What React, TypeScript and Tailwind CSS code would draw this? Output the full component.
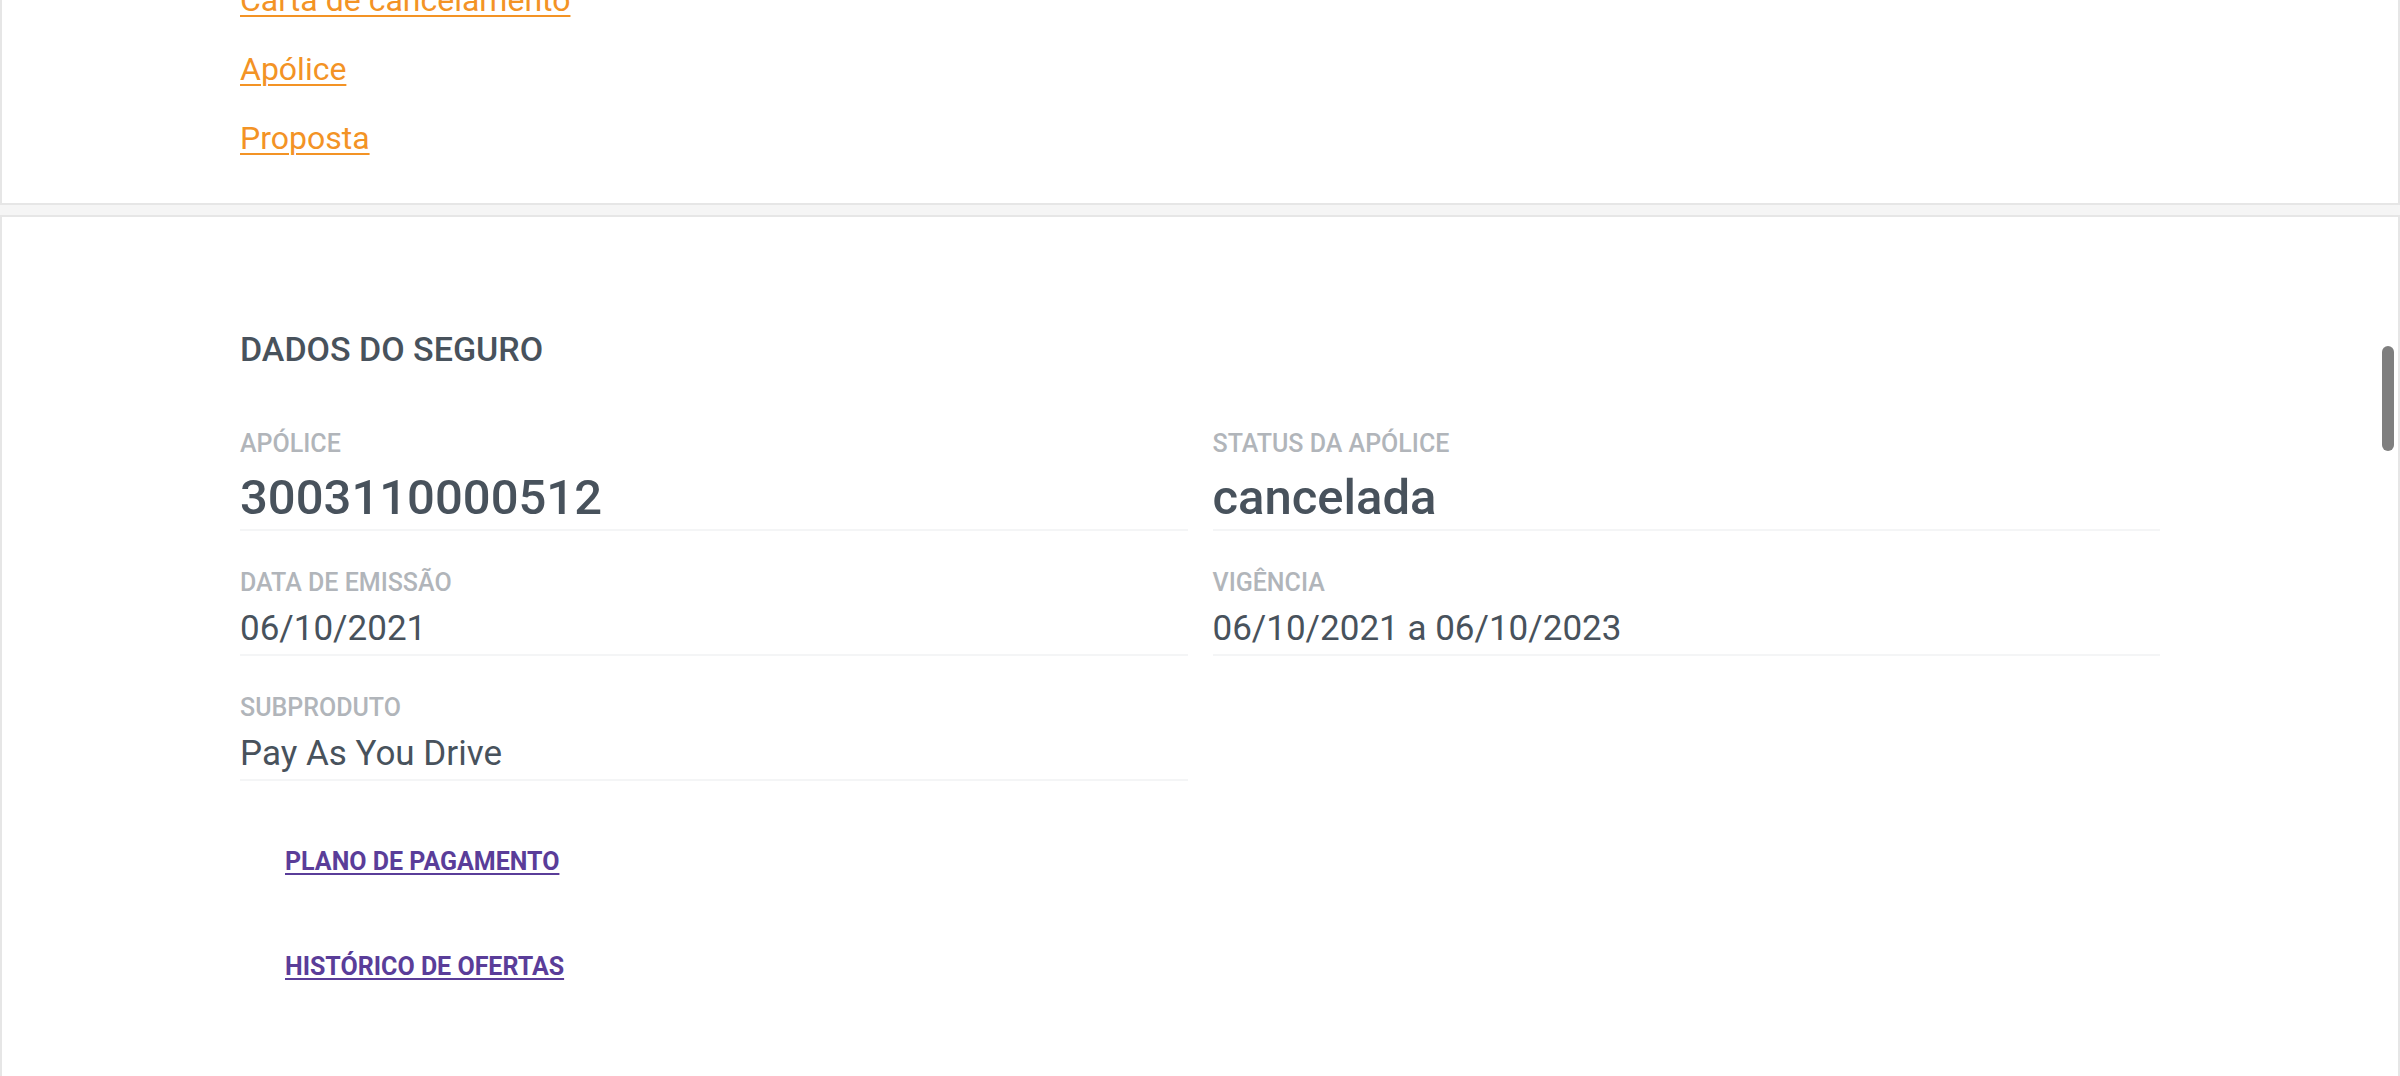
import type { ReactNode } from 'react'

const font = { fontFamily: 'Roboto, "Liberation Sans", Arial, sans-serif' }

// links of the documents card (page is scrolled, first one is cut at the top)
const docLinks = ['Carta de cancelamento', 'Apólice', 'Proposta']

function Field({ label, value, big = false }: { label: string; value: ReactNode; big?: boolean }) {
  return (
    <div className={`flex flex-col border-b-2 border-[#f4f5f6] ${big ? 'pb-[3px]' : 'pb-[5px]'}`}>
      <span className="text-[25px] leading-[30px] font-medium uppercase text-[#b1b5ba]">{label}</span>
      {big ? (
        <span className="mt-[11px] text-[49px] leading-[56px] font-medium text-[#48525c]">{value}</span>
      ) : (
        <span className="mt-[10px] text-[35px] leading-[41px] text-[#48525c]">{value}</span>
      )}
    </div>
  )
}

export default function App() {
  return (
    <div className="h-[1076px] overflow-hidden bg-[#f5f5f5]" style={font}>
      {/* Documents card */}
      <section className="-mt-[60px] bg-white border-2 border-[#e6e6e6] pt-[40px] pb-[46px]">
        <div className="w-[1920px] mx-auto flex flex-col gap-[32px]">
          {docLinks.map((l) => (
            <a
              key={l}
              href="#"
              className="self-start text-[32px] leading-[37px] text-[#f39325] underline underline-offset-[4px] decoration-[2px]"
            >
              {l}
            </a>
          ))}
        </div>
      </section>

      {/* Insurance data card */}
      <section className="mt-[10px] h-[900px] bg-white border-2 border-[#e6e6e6] pt-[112px]">
        <div className="w-[1920px] mx-auto">
          <h2 className="text-[34px] leading-[40px] font-medium text-[#48525c]">DADOS DO SEGURO</h2>

          <div className="mt-[60px] grid grid-cols-2 gap-x-[25px] gap-y-[37px] w-[1920px]">
            <Field label="Apólice" value="3003110000512" big />
            <Field label="Status da apólice" value="cancelada" big />
            <Field label="Data de emissão" value="06/10/2021" />
            <Field label="Vigência" value="06/10/2021 a 06/10/2023" />
            <Field label="Subproduto" value="Pay As You Drive" />
          </div>

          <div className="mt-[66px] flex flex-col gap-[76px] pl-[45px]">
            <a href="#" className="self-start text-[25px] leading-[29px] font-bold text-[#5a3d99] underline underline-offset-[3px] decoration-[2px]">
              PLANO DE PAGAMENTO
            </a>
            <a href="#" className="self-start text-[25px] leading-[29px] font-bold text-[#5a3d99] underline underline-offset-[3px] decoration-[2px]">
              HISTÓRICO DE OFERTAS
            </a>
          </div>
        </div>
      </section>

      {/* overlay scrollbar thumb */}
      <div className="fixed left-[2382px] top-[346px] w-[12px] h-[105px] rounded-full bg-[#7f7f7f]" />
    </div>
  )
}
